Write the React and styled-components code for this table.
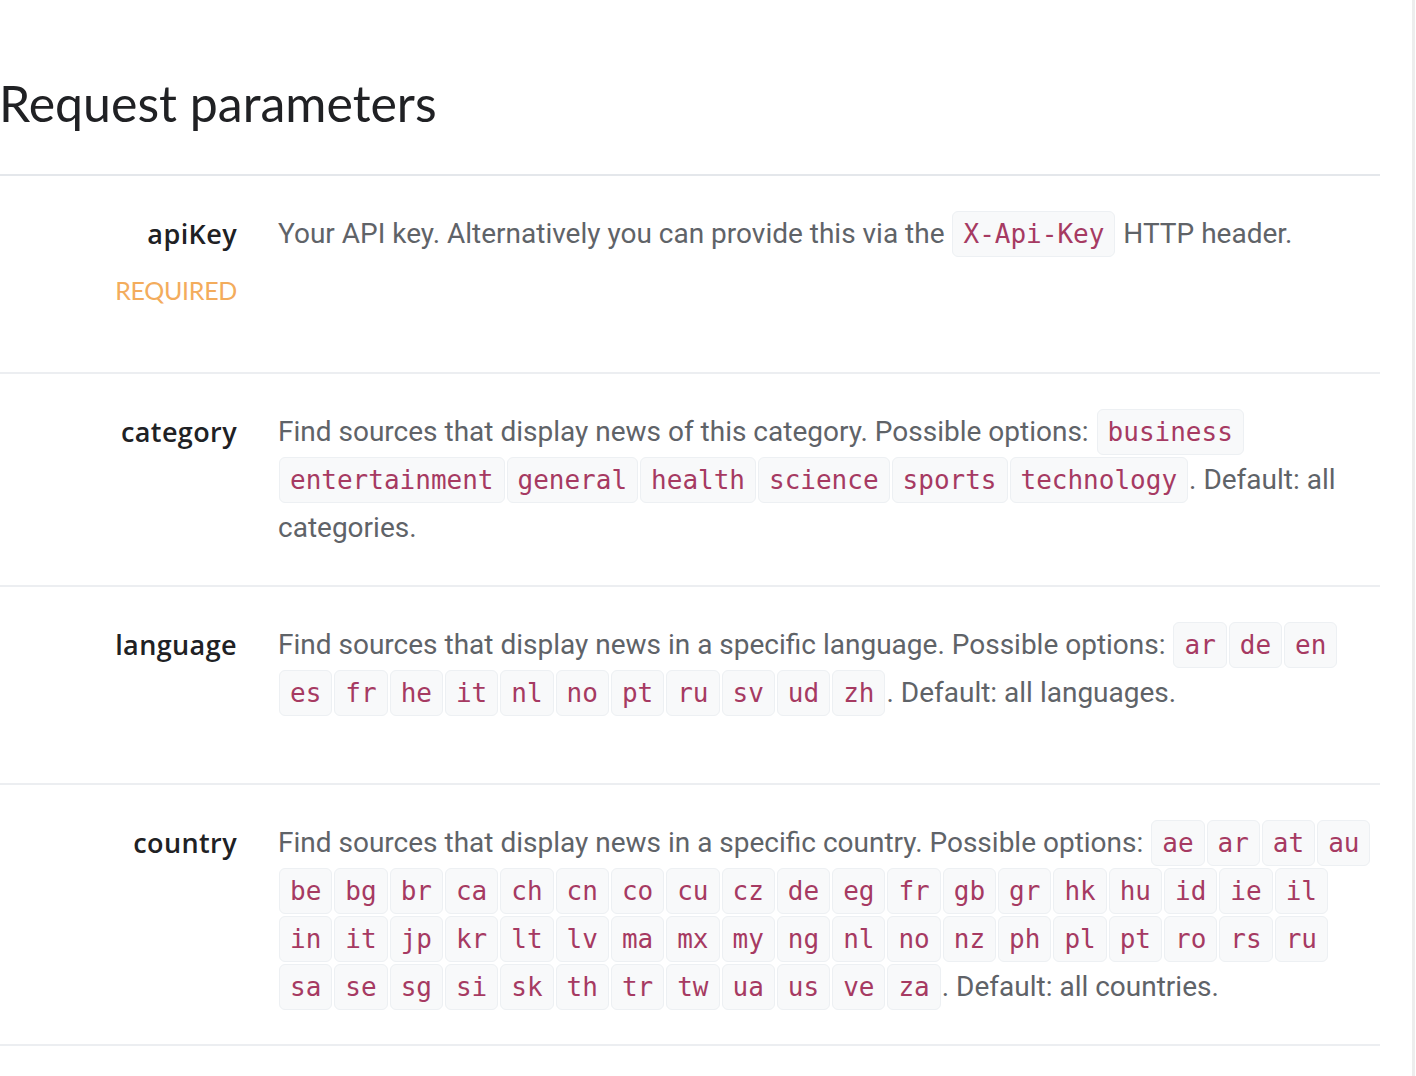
import React from "react";
import styled, { createGlobalStyle } from "styled-components";

const Global = createGlobalStyle`
  html, body { margin: 0; padding: 0; background: #ffffff; }
  body { font-family: Roboto, "Liberation Sans", sans-serif; }
`;

const Page = styled.div`
  display: flex;
  min-height: 100vh;
  padding-right: 1px;
  box-sizing: border-box;
`;

const Main = styled.main`
  flex: 0 0 1380px;
  width: 1380px;
`;

const Edge = styled.div`
  flex: 0 0 3px;
  margin-left: auto;
  background: #ededed;
`;

const Header = styled.header`
  padding: 73px 0 41px;
  border-bottom: 2px solid #e4e7eb;
`;

const Title = styled.h1`
  margin: 0 0 0 -1px;
  font-family: Lato, "Open Sans", sans-serif;
  font-weight: 400;
  font-size: 50px;
  line-height: 60px;
  color: #202124;
`;

const Row = styled.section`
  display: grid;
  grid-template-columns: 237px 1fr;
  column-gap: 41px;
  padding: 34px 0 33px;
  min-height: 198px;
  box-sizing: border-box;
  border-bottom: 2px solid #eceef1;
`;

const NameCell = styled.div`
  text-align: right;
`;

const Name = styled.div`
  font-family: "Open Sans", Lato, sans-serif;
  font-weight: 600;
  font-size: 27px;
  letter-spacing: 0.4px;
  line-height: 48px;
  color: #202124;
`;

const Required = styled.div`
  margin-top: 8px;
  font-family: Lato, "Open Sans", sans-serif;
  font-weight: 400;
  font-size: 25px;
  letter-spacing: -0.3px;
  line-height: 48px;
  color: #f3ac5c;
`;

const Desc = styled.div`
  font-family: Roboto, "Liberation Sans", sans-serif;
  font-size: 28px;
  line-height: 48px;
  color: #5f6368;
`;

const Chip = styled.code`
  display: inline-block;
  margin: 0 1px;
  padding: 0 10px;
  line-height: 44px;
  border: 1px solid #edf0f3;
  border-radius: 6px;
  background: #f8f9fa;
  font-family: "DejaVu Sans Mono", "Liberation Mono", monospace;
  font-size: 26px;
  color: #a63a62;
  white-space: nowrap;
`;

const categories = ["business", "entertainment", "general", "health", "science", "sports", "technology"];
const languages = ["ar", "de", "en", "es", "fr", "he", "it", "nl", "no", "pt", "ru", "sv", "ud", "zh"];
const countries = "ae ar at au be bg br ca ch cn co cu cz de eg fr gb gr hk hu id ie il in it jp kr lt lv ma mx my ng nl no nz ph pl pt ro rs ru sa se sg si sk th tr tw ua us ve za".split(" ");

const Chips = ({ items }) => items.map((c) => <Chip key={c}>{c}</Chip>);

const Param = ({ name, required, children }) => (
  <Row>
    <NameCell>
      <Name>{name}</Name>
      {required && <Required>REQUIRED</Required>}
    </NameCell>
    <Desc>{children}</Desc>
  </Row>
);

export default function App() {
  return (
    <>
      <Global />
      <Page>
        <Main>
          <Header>
            <Title>Request parameters</Title>
          </Header>
          <Param name="apiKey" required>
            Your API key. Alternatively you can provide this via the <Chip>X-Api-Key</Chip> HTTP header.
          </Param>
          <Param name="category">
            Find sources that display news of this category. Possible options: <Chips items={categories} />. Default: all categories.
          </Param>
          <Param name="language">
            Find sources that display news in a specific language. Possible options: <Chips items={languages} />. Default: all languages.
          </Param>
          <Param name="country">
            Find sources that display news in a specific country. Possible options: <Chips items={countries} />. Default: all countries.
          </Param>
        </Main>
        <Edge />
      </Page>
    </>
  );
}
